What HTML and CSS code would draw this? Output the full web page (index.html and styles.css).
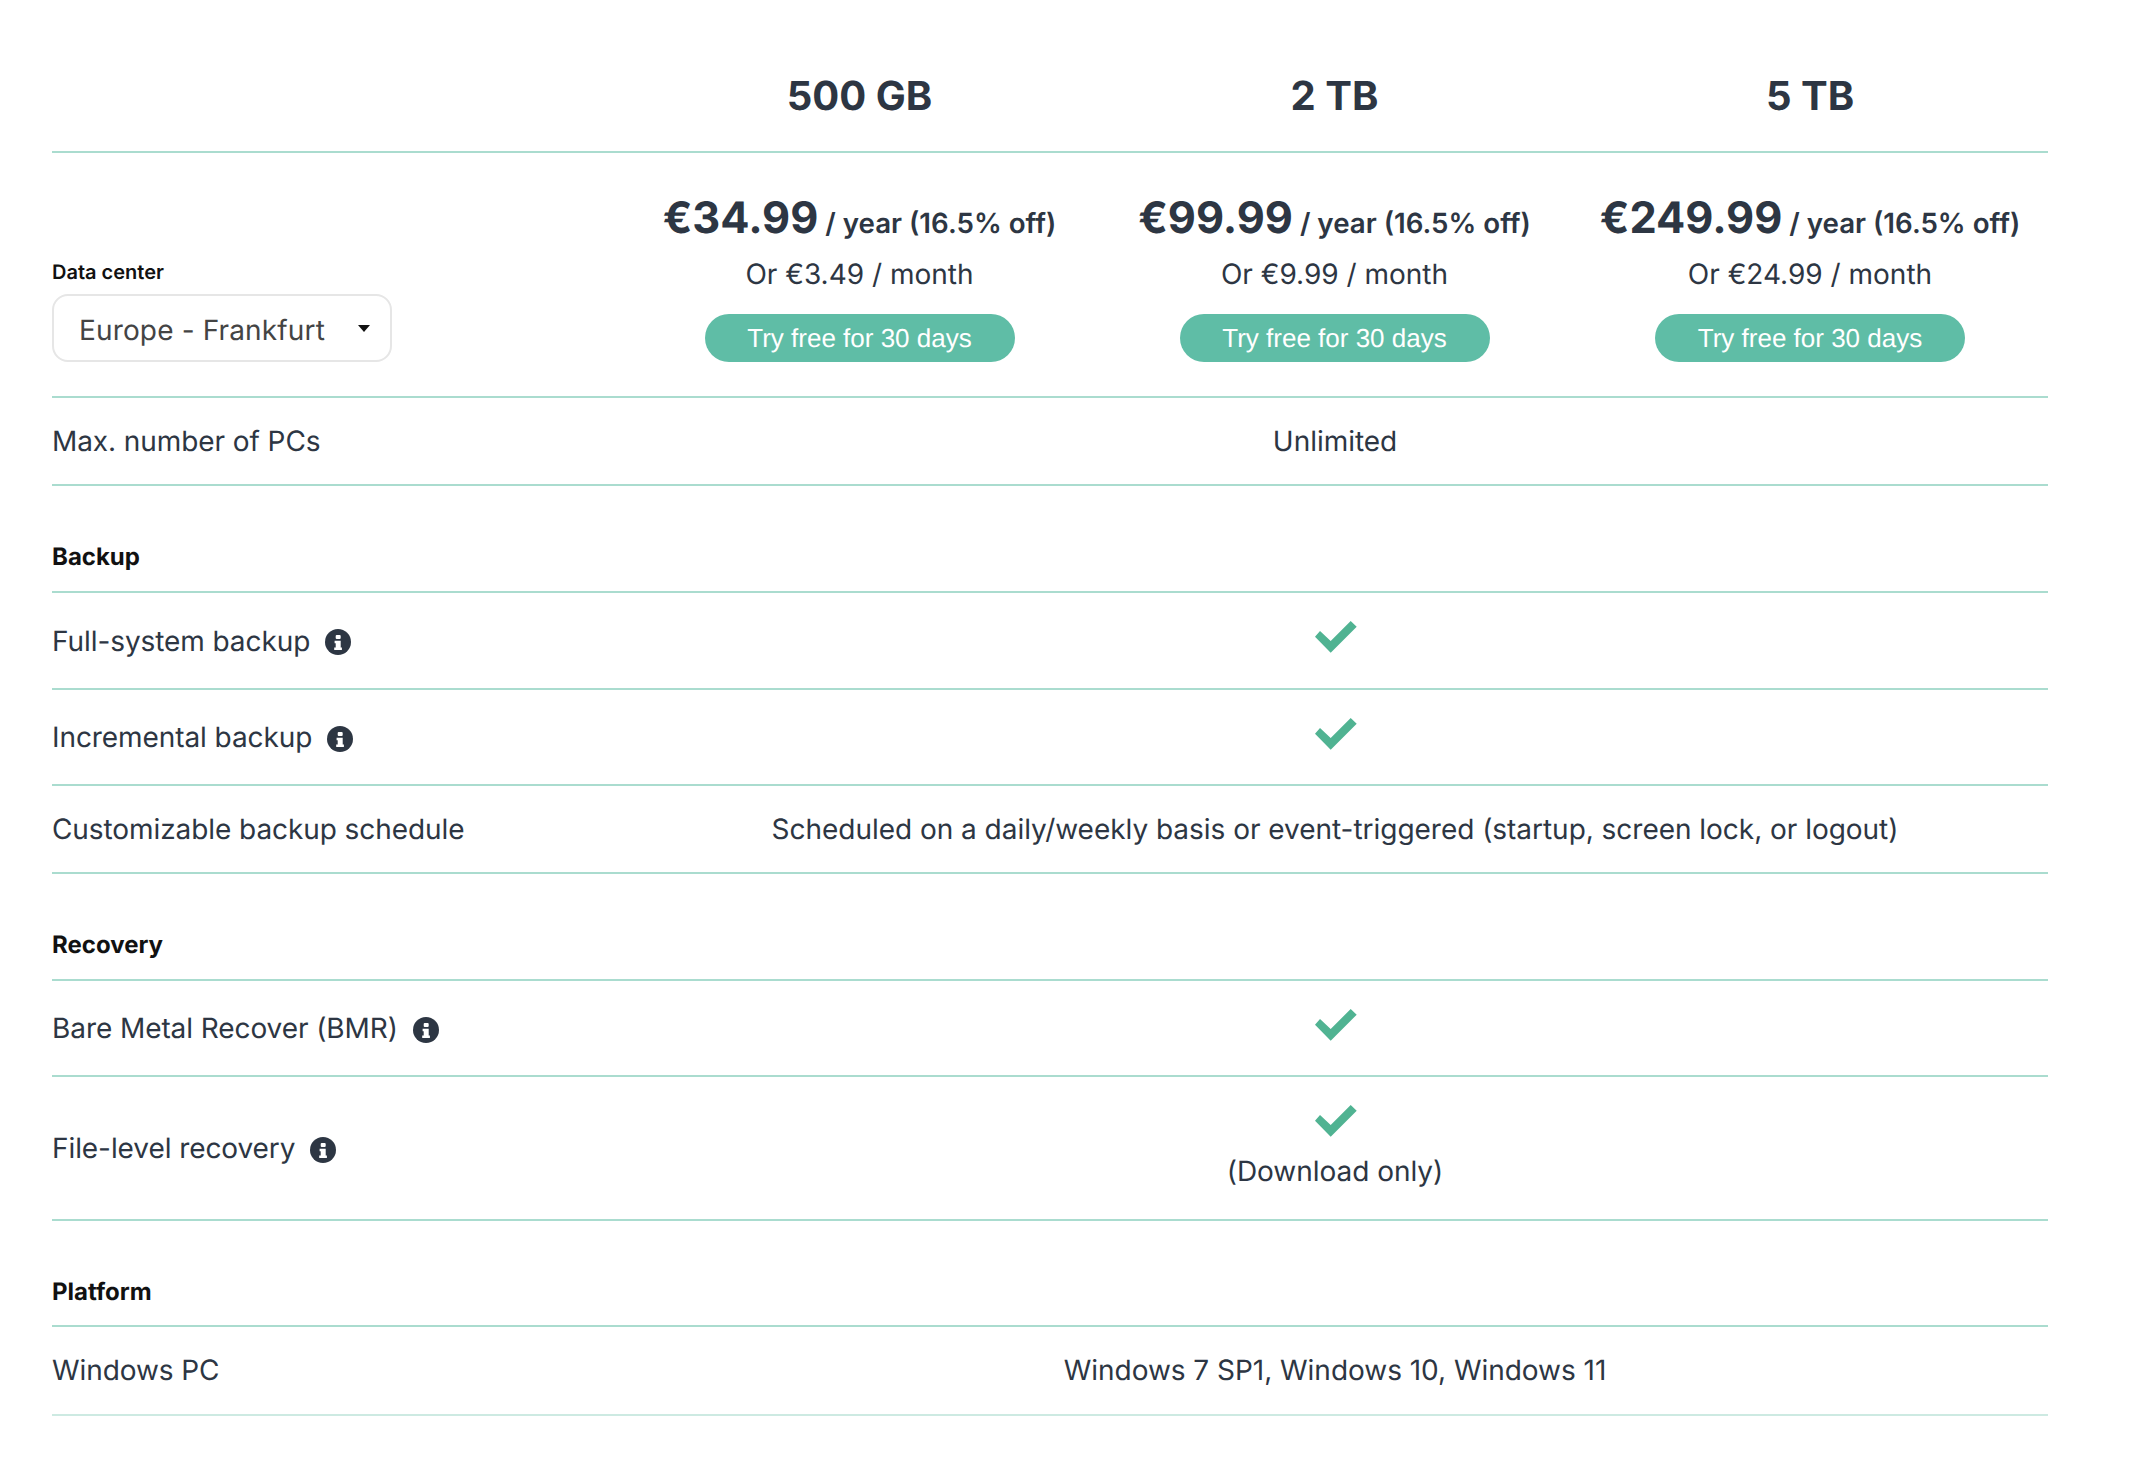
FILE: index.html
```html
<!DOCTYPE html>
<html lang="en">
<head>
<meta charset="utf-8">
<title>Plans</title>
<link rel="stylesheet" href="styles.css">
</head>
<body>
<svg class="defs" width="0" height="0" aria-hidden="true">
  <symbol id="info" viewBox="0 0 26 26">
    <circle cx="13" cy="13" r="13" fill="#2d3643"/>
    <rect x="10.700" y="6" width="5" height="4" rx="1" fill="#fff"/>
    <path d="M9.600 11.800h6.100v6.800h1.200V21H9.200v-2.400h1.500v-4.400H9.600z" fill="#fff"/>
  </symbol>
  <symbol id="check" viewBox="0 0 42 32">
    <path d="M0 15.700 5 10 15.700 20 35.700 0 41.700 5.700 15.700 31.700z" fill="#50b392"/>
  </symbol>
</svg>
<main class="plans">
  <div class="row row-head">
    <div></div>
    <div class="size">500 GB</div>
    <div class="size">2 TB</div>
    <div class="size">5 TB</div>
  </div>
  <div class="row row-price">
    <div class="dc">
      <div class="dc-label">Data center</div>
      <div class="select"><span class="select-text">Europe - Frankfurt</span><i class="caret"></i></div>
    </div>
    <div class="plan">
      <div class="price"><b>€34.99</b> / year (16.5% off)</div>
      <div class="monthly">Or €3.49 / month</div>
      <a class="try">Try free for 30 days</a>
    </div>
    <div class="plan">
      <div class="price"><b>€99.99</b> / year (16.5% off)</div>
      <div class="monthly">Or €9.99 / month</div>
      <a class="try">Try free for 30 days</a>
    </div>
    <div class="plan">
      <div class="price"><b>€249.99</b> / year (16.5% off)</div>
      <div class="monthly">Or €24.99 / month</div>
      <a class="try">Try free for 30 days</a>
    </div>
  </div>
  <div class="row row-text"><div class="feat">Max. number of PCs</div><div class="span">Unlimited</div></div>

  <div class="section">Backup</div>
  <div class="row row-check row-check-first"><div class="feat">Full-system backup <svg class="info"><use href="#info"/></svg></div><div class="span"><svg class="check"><use href="#check"/></svg></div></div>
  <div class="row row-check"><div class="feat">Incremental backup <svg class="info"><use href="#info"/></svg></div><div class="span"><svg class="check"><use href="#check"/></svg></div></div>
  <div class="row row-text"><div class="feat">Customizable backup schedule</div><div class="span">Scheduled on a daily/weekly basis or event-triggered (startup, screen lock, or logout)</div></div>

  <div class="section">Recovery</div>
  <div class="row row-check"><div class="feat">Bare Metal Recover (BMR) <svg class="info"><use href="#info"/></svg></div><div class="span"><svg class="check"><use href="#check"/></svg></div></div>
  <div class="row row-tall"><div class="feat">File-level recovery <svg class="info"><use href="#info"/></svg></div><div class="span"><svg class="check"><use href="#check"/></svg><div class="note">(Download only)</div></div></div>

  <div class="section section-last">Platform</div>
  <div class="row row-text row-last"><div class="feat">Windows PC</div><div class="span">Windows 7 SP1, Windows 10, Windows 11</div></div>
</main>
</body>
</html>
```

FILE: styles.css
```css
* { box-sizing: border-box; }
html, body { margin: 0; background: #fff; }
body {
  font-family: Inter, "Liberation Sans", sans-serif;
  font-size: 28px;
  color: #2d3643;
  text-rendering: geometricPrecision;
}
.defs { position: absolute; }
.plans { width: 1996px; margin-left: 52px; }
.row {
  display: grid;
  grid-template-columns: 570px 475px 475px 476px;
  align-items: center;
  border-bottom: 2px solid #aadccf;
}
.row-head { height: 153px; padding-top: 40px; }
.size { text-align: center; font-size: 40px; font-weight: 650; line-height: 48px; }
.row-price { height: 245px; align-items: start; padding-top: 37px; }
.dc { padding-top: 70px; }
.dc-label { font-size: 20px; font-weight: 600; color: #111; line-height: 24px; }
.select {
  width: 340px;
  height: 68px;
  margin-top: 10px;
  border: 2px solid #e6e6e6;
  border-radius: 16px;
  display: flex;
  align-items: center;
  justify-content: space-between;
  padding: 0 20px 0 25px;
  color: #444;
}
.select-text { padding-top: 4px; letter-spacing: 0.15px; }
.caret { width: 0; height: 0; border: 6px solid transparent; border-top: 7px solid #111; border-bottom: 0; }
.plan { text-align: center; }
.price { font-size: 27.7px; font-weight: 600; line-height: 56px; white-space: nowrap; }
.price b { font-size: 43.300px; font-weight: 700; }
.monthly { line-height: 34px; margin-top: 6px; }
.try {
  display: block;
  width: 310px;
  height: 48px;
  margin: 23px auto 0;
  border-radius: 24px;
  background: #5fbda6;
  color: #fff;
  font-family: "Liberation Sans", Arial, sans-serif;
  font-size: 26px;
  line-height: 48px;
  text-align: center;
}
.span { grid-column: 2 / 5; text-align: center; letter-spacing: -0.03px; }
.row-text { height: 88px; }
.row-check { height: 96px; }
.row-check-first { height: 97px; }
.row-tall { height: 144px; }
.row-last { height: 89px; padding-bottom: 1px; border-bottom-color: #cdeae2; }
.section {
  height: 107px;
  padding-top: 56px;
  font-size: 24px;
  font-weight: 700;
  line-height: 30px;
  color: #111;
  border-bottom: 2px solid #aadccf;
}
.section-last { height: 106px; }
.feat { display: flex; align-items: center; gap: 15px; letter-spacing: -0.08px; }
.info { width: 26px; height: 26px; flex: none; margin-top: 3px; }
.check { width: 42px; height: 32px; display: block; margin: 0 auto 7px; transform: translateX(1px); }
.note { line-height: 34px; margin-top: 17px; margin-bottom: 3px; }
```
